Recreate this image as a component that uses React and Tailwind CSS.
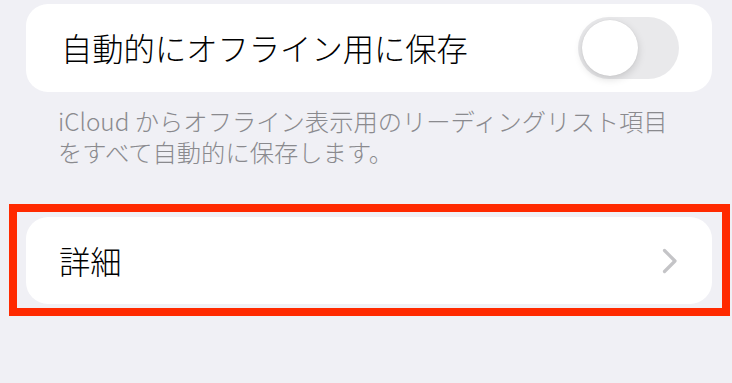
import React from "react";

export default function App() {
  return (
    <div
      className="relative w-[732px] h-[383px] overflow-hidden bg-[#f0f0f5]"
      style={{ fontFamily: '"Noto Sans CJK JP", "Noto Sans", sans-serif' }}
    >
      <div className="flex flex-col pl-[26px] pr-[20px] pt-[4px]">
        <div className="flex items-center justify-between h-[88px] rounded-[22px] bg-white pl-[35px] pr-[33px]">
          <span className="text-[31.3px] leading-none font-light text-black">自動的にオフライン用に保存</span>
          <div className="flex items-center w-[101px] h-[62px] rounded-full bg-[#e9e9eb] pl-[4px]">
            <div className="w-[56px] h-[56px] rounded-full bg-white shadow-[0_3px_8px_rgba(0,0,0,0.15),0_0_1px_rgba(0,0,0,0.12)]" />
          </div>
        </div>
        <p className="mt-[13px] pl-[32px] pr-[10px] text-[24.3px] leading-[31px] font-light text-[#8a8a8e]">
          iCloud からオフライン表示用のリーディングリスト項目
          <br />
          をすべて自動的に保存します。
        </p>
        <div className="mt-[50px] flex items-center justify-between h-[87px] rounded-[22px] bg-white pl-[33px] pr-[34px]">
          <span className="text-[31.3px] leading-none font-light text-black">詳細</span>
          <svg width="16" height="26" viewBox="0 0 16 26" fill="none">
            <path d="M2.5 2.5 L13 13 L2.5 23.5" stroke="#c4c4c7" strokeWidth="3.2" strokeLinecap="round" strokeLinejoin="round" />
          </svg>
        </div>
      </div>
      <div className="absolute left-[9px] top-[204px] w-[721px] h-[112px] border-[8px] border-[#ff2a00]" />
    </div>
  );
}
